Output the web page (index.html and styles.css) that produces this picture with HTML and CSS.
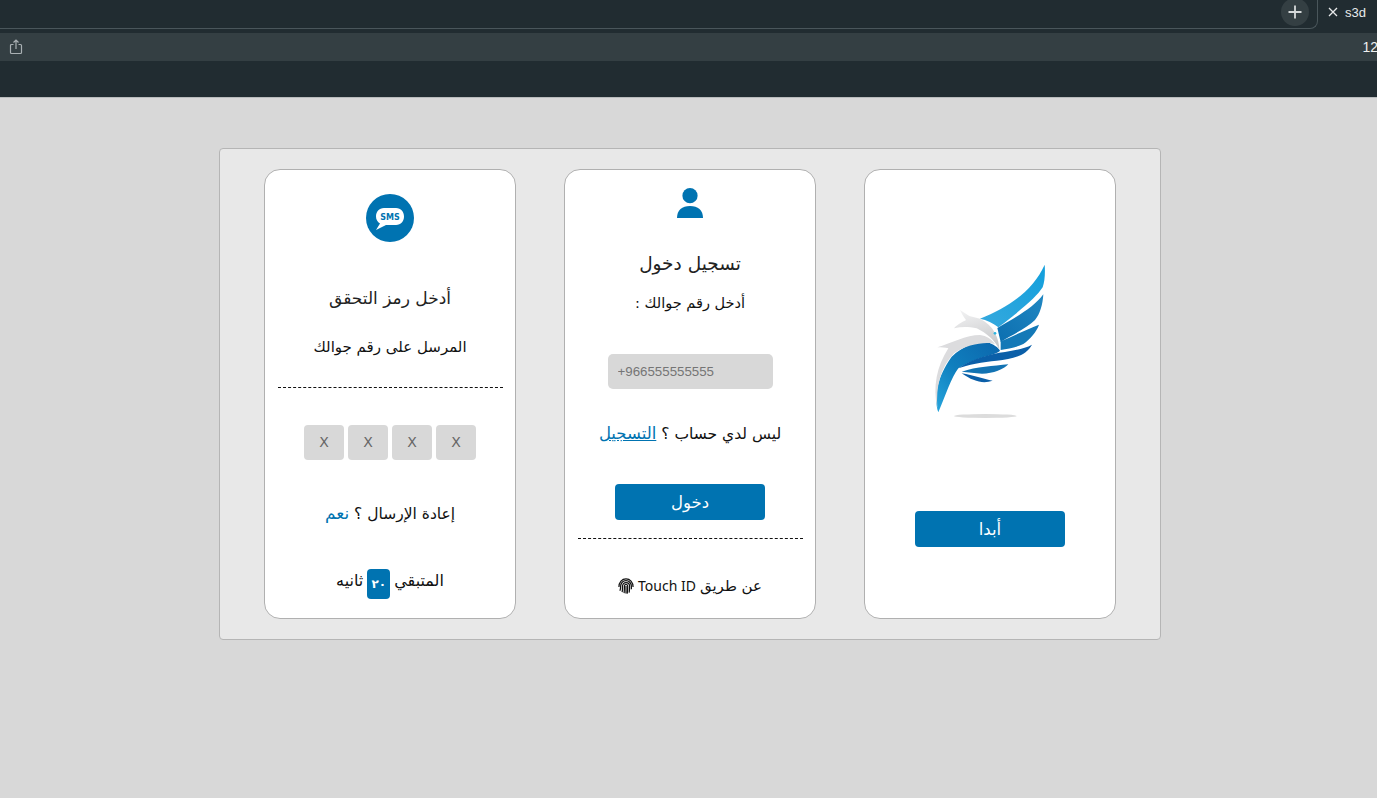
FILE: index.html
```html
<!DOCTYPE html>
<html lang="ar">
<head>
    <meta charset="UTF-8">
    <title>s3d</title>
    <link rel="stylesheet" href="styles.css">
</head>
<body>

<div class="browser">
    <div class="tabs">
        <div class="tabs-left">
            <span class="new-tab">
                <svg width="14" height="14" viewBox="0 0 14 14"><path d="M7 0.5v13M0.5 7h13" stroke="#d5d9da" stroke-width="1.8"/></svg>
            </span>
        </div>
        <div class="tab-right">
            <svg width="10" height="10" viewBox="0 0 10 10"><path d="M1 1l8 8M9 1l-8 8" stroke="#e8eaeb" stroke-width="1.3"/></svg>
            <span>s3d</span>
        </div>
    </div>
    <div class="toolbar">
        <svg width="14" height="16" viewBox="0 0 14 16" fill="none" stroke="#a9b0b3" stroke-width="1.2">
            <path d="M4.5 5.5H2.5a1 1 0 0 0-1 1v7a1 1 0 0 0 1 1h9a1 1 0 0 0 1-1v-7a1 1 0 0 0-1-1H9.500"/>
            <path d="M7 10V1M4.500 3.500L7 1l2.500 2.500"/>
        </svg>
        <span class="zoom-label">12</span>
    </div>
    <div class="browser-bottom"></div>
</div>

<div class="page">
    <div class="panel" dir="rtl">

        <div class="card">
            <div class="logo">
                <svg width="220" height="190" viewBox="0 0 660 570">
                    <defs>
                        <linearGradient id="wingTop" x1="1" y1="0" x2="0" y2="1">
                            <stop offset="0" stop-color="#129fdc"/>
                            <stop offset="1" stop-color="#36a9de"/>
                        </linearGradient>
                        <linearGradient id="wingMid" x1="1" y1="0" x2="0" y2="1">
                            <stop offset="0" stop-color="#2087c2"/>
                            <stop offset="1" stop-color="#0c6fb0"/>
                        </linearGradient>
                        <linearGradient id="bodyBlue" x1="0" y1="1" x2="1" y2="0">
                            <stop offset="0" stop-color="#27a6dd"/>
                            <stop offset="0.45" stop-color="#0f7fbe"/>
                            <stop offset="1" stop-color="#0c66ac"/>
                        </linearGradient>
                        <linearGradient id="headGrey" x1="0" y1="0" x2="0.3" y2="1">
                            <stop offset="0" stop-color="#f4f4f5"/>
                            <stop offset="1" stop-color="#c9cacc"/>
                        </linearGradient>
                    </defs>
                    <ellipse cx="316" cy="528" rx="94" ry="6" fill="#dcdcdc"/>
                    <path d="M300 236C390 200 460 150 494 74C496 100 494 125 488 142C470 170 430 205 355 262C340 250 320 240 300 236Z" fill="url(#wingTop)"/>
                    <path d="M490 163C488 195 480 222 465 240C440 265 400 282 362 306L352 264C400 235 460 205 490 163Z" fill="url(#wingMid)"/>
                    <path d="M477 254C470 275 450 298 430 312C410 322 385 326 362 330L362 304C400 288 440 268 477 254Z" fill="#1479b7"/>
                    <path d="M175 517C160 470 172 410 215 350C250 318 290 303 320 305C340 312 355 322 360 332C350 345 290 350 235 385C215 410 195 470 175 517Z" fill="url(#bodyBlue)"/>
                    <path d="M456 314C440 345 400 358 350 362C310 365 260 375 235 385C280 355 330 342 375 336C405 332 435 325 456 314Z" fill="#0b5fa8"/>
                    <path d="M385 373C370 390 330 405 290 400C275 398 260 396 245 395C290 380 340 378 385 373Z" fill="#1273b3"/>
                    <path d="M245 400C280 405 310 418 338 422C310 432 280 425 245 400Z" fill="#0b5fa8"/>
                    <path d="M172 322C210 310 260 285 300 285C320 287 335 298 345 312C320 303 260 312 222 340C180 385 168 440 172 505C158 440 170 380 205 325C195 322 185 322 172 322Z" fill="#dcdcde"/>
                    <path d="M240 210L268 228L300 236C340 255 358 295 358 330C345 300 320 280 290 265C265 260 245 260 222 265C235 250 250 245 258 240C250 230 245 220 240 210Z" fill="url(#headGrey)"/>
                    <circle cx="345" cy="280" r="4" fill="#2bb3e0"/>
                </svg>
            </div>
            <button class="btn btn-start">أبدا</button>
        </div>

        <div class="card">
            <div class="user-icon">
                <svg width="26" height="30" viewBox="0 0 26 30">
                    <circle cx="13" cy="7.700" r="7.600" fill="#0073b1"/>
                    <path d="M0 30C0 22 5 18 13 18s13 4 13 12Z" fill="#0073b1"/>
                </svg>
            </div>
            <h2 class="title title-login">تسجيل دخول</h2>
            <p class="text text-phone">أدخل رقم جوالك :</p>
            <input class="phone" type="text" dir="ltr" placeholder="+966555555555">
            <p class="text text-signup">ليس لدي حساب ؟ <a class="signup-link" href="#">التسجيل</a></p>
            <button class="btn btn-login">دخول</button>
            <hr class="dash dash-login">
            <p class="text text-touch">عن طريق <span class="touch-word" dir="ltr">Touch ID</span>
                <svg class="finger" width="16" height="16" viewBox="0 0 17 17" fill="none" stroke="#111" stroke-width="1.300">
                    <path d="M1 9.500C1 4.600 4.200 1 8.500 1S16 4.600 16 9.500"/>
                    <path d="M2 13.500C2.600 12 2.800 10.300 2.800 8.800C2.800 5.300 5.300 2.800 8.500 2.800S14.200 5.300 14.200 8.800V12"/>
                    <path d="M4.400 15C4.800 13 4.800 10.500 4.800 8.800C4.800 6.400 6.400 4.800 8.500 4.800S12.300 6.400 12.300 8.800C12.300 11 12.300 13 11.800 15.500"/>
                    <path d="M6.500 16C6.800 14 6.800 10.500 6.800 8.800C6.800 7.500 7.500 6.700 8.500 6.700S10.300 7.500 10.300 8.800C10.300 11.500 10.200 14 9.800 16.500"/>
                    <path d="M8.500 8.500V16.500"/>
                </svg>
            </p>
        </div>

        <div class="card">
            <div class="sms-icon">
                <svg width="48" height="48" viewBox="0 0 48 48">
                    <circle cx="24" cy="24" r="24" fill="#0073b1"/>
                    <path d="M18 14H30C35 14 38 18 38 22.500C38 27 35 31 30 31H20L10 36L14 29.500C11.500 28 10 25.500 10 22.500C10 18 13 14 18 14Z" fill="#fff"/>
                    <text class="sms-word" x="24" y="25.800" text-anchor="middle">SMS</text>
                </svg>
            </div>
            <h2 class="title title-code">أدخل رمز التحقق</h2>
            <p class="text text-sent">المرسل على رقم جوالك</p>
            <hr class="dash dash-code">
            <div class="code-boxes">
                <span class="code-box">X</span>
                <span class="code-box">X</span>
                <span class="code-box">X</span>
                <span class="code-box">X</span>
            </div>
            <p class="text text-resend">إعادة الإرسال ؟ <a class="yes-link" href="#">نعم</a></p>
            <p class="text text-left-time">المتبقي <span class="timer">٢٠</span> ثانيه</p>
        </div>

    </div>
</div>

</body>
</html>
```

FILE: styles.css
```css
* {
    box-sizing: border-box;
}
html, body {
    height: 100%;
}
body {
    margin: 0;
    background-color: #d8d8d8;
    font-family: "DejaVu Sans", sans-serif;
    color: #111;
    overflow: hidden;
}

/* browser chrome */
.browser {
    height: 98px;
    background-color: #212c31;
    border-bottom: 1px solid #b9bcbd;
}
.tabs {
    height: 33px;
    display: flex;
    justify-content: space-between;
}
.tabs-left {
    flex: 1;
    height: 29px;
    margin-right: 59px;
    display: flex;
    justify-content: flex-end;
    border-bottom: 1px solid #4a565b;
    border-right: 1px solid #4a565b;
    border-bottom-right-radius: 8px;
}
.new-tab {
    width: 28px;
    height: 28px;
    margin-right: 8px;
    margin-top: -2px;
    border-radius: 50%;
    background-color: #343f43;
    display: flex;
    align-items: center;
    justify-content: center;
}
.tab-right {
    position: absolute;
    left: 1328px;
    top: 0;
    height: 24px;
    display: flex;
    align-items: center;
    gap: 7px;
    font-family: "Liberation Sans", sans-serif;
    font-size: 13px;
    color: #e8eaeb;
}
.toolbar {
    height: 28px;
    background-color: #343f43;
    display: flex;
    align-items: center;
    justify-content: space-between;
    padding-left: 9px;
    overflow: hidden;
}
.zoom-label {
    font-family: "Liberation Sans", sans-serif;
    font-size: 14px;
    color: #eef0f0;
    margin-right: -1px;
}

/* page */
.page {
    padding-top: 50px;
    display: flex;
    justify-content: center;
}
.panel {
    width: 942px;
    height: 492px;
    margin-left: 3px;
    padding: 20px 44px;
    background-color: #e8e8e8;
    border: 1px solid #b5b5b5;
    border-radius: 4px;
    display: flex;
    gap: 48px;
}
.card {
    width: 252px;
    height: 450px;
    padding: 0 13px;
    background: #ffffff;
    border: 1px solid #b0b0b0;
    border-radius: 16px;
    display: flex;
    flex-direction: column;
    align-items: center;
    text-align: center;
}

.title {
    margin: 0;
    font-weight: normal;
    line-height: 24px;
    color: #222;
}
.text {
    margin: 0;
    font-size: 15px;
    line-height: 20px;
}
.btn {
    width: 150px;
    height: 36px;
    border: none;
    border-radius: 4px;
    background-color: #0073b1;
    color: #ffffff;
    font-family: inherit;
    font-size: 16.500px;
}
.dash {
    width: 225px;
    margin: 0;
    align-self: flex-end;
    border: none;
    border-top: 1px dashed #111;
}

/* first card */
.logo {
    margin-top: 70px;
    height: 190px;
    width: 220px;
}
.btn-start {
    margin-top: 81px;
}

/* second card */
.user-icon {
    margin-top: 18px;
    height: 30px;
}
.title-login {
    margin-top: 34px;
    font-size: 18.500px;
}
.text-phone {
    margin-top: 17px;
    font-size: 14.500px;
}
.phone {
    width: 165px;
    height: 35px;
    margin-top: 41px;
    padding: 0 10px;
    border: none;
    border-radius: 5px;
    background-color: #d8d8d8;
    font-family: "Liberation Sans", sans-serif;
    font-size: 13.300px;
}
.phone::placeholder {
    color: #757575;
}
.text-signup {
    margin-top: 35px;
    font-size: 15.500px;
}
.signup-link {
    color: #0073b1;
    font-size: 16.500px;
}
.btn-login {
    margin-top: 40px;
}
.dash-login {
    margin-top: 18px;
}
.text-touch {
    margin-top: 37px;
    display: flex;
    align-items: center;
    gap: 4px;
}
.touch-word {
    font-family: "Noto Sans", "DejaVu Sans", sans-serif;
    font-size: 14px;
}
.finger {
    flex: none;
}

/* third card */
.sms-icon {
    margin-top: 24px;
    height: 48px;
}
.sms-word {
    font-family: "DejaVu Sans", sans-serif;
    font-size: 8px;
    font-weight: bold;
    fill: #0073b1;
}
.title-code {
    margin-top: 44px;
    font-size: 17px;
}
.text-sent {
    margin-top: 27px;
}
.dash-code {
    margin-top: 30px;
}
.code-boxes {
    margin-top: 37px;
    display: flex;
    gap: 4px;
}
.code-box {
    width: 40px;
    height: 35px;
    border-radius: 4px;
    background-color: #d8d8d8;
    color: #666;
    font-size: 14px;
    line-height: 35px;
}
.text-resend {
    margin-top: 43px;
    font-size: 15.500px;
}
.yes-link {
    color: #0073b1;
    text-decoration: none;
    font-size: 17px;
}
.text-left-time {
    margin-top: 39px;
    display: flex;
    align-items: center;
    gap: 4px;
    font-size: 16px;
}
.timer {
    width: 23px;
    height: 30px;
    margin-top: 6px;
    border-radius: 4px;
    background-color: #0073b1;
    color: #ffffff;
    font-size: 12px;
    font-weight: bold;
    line-height: 30px;
}
```
